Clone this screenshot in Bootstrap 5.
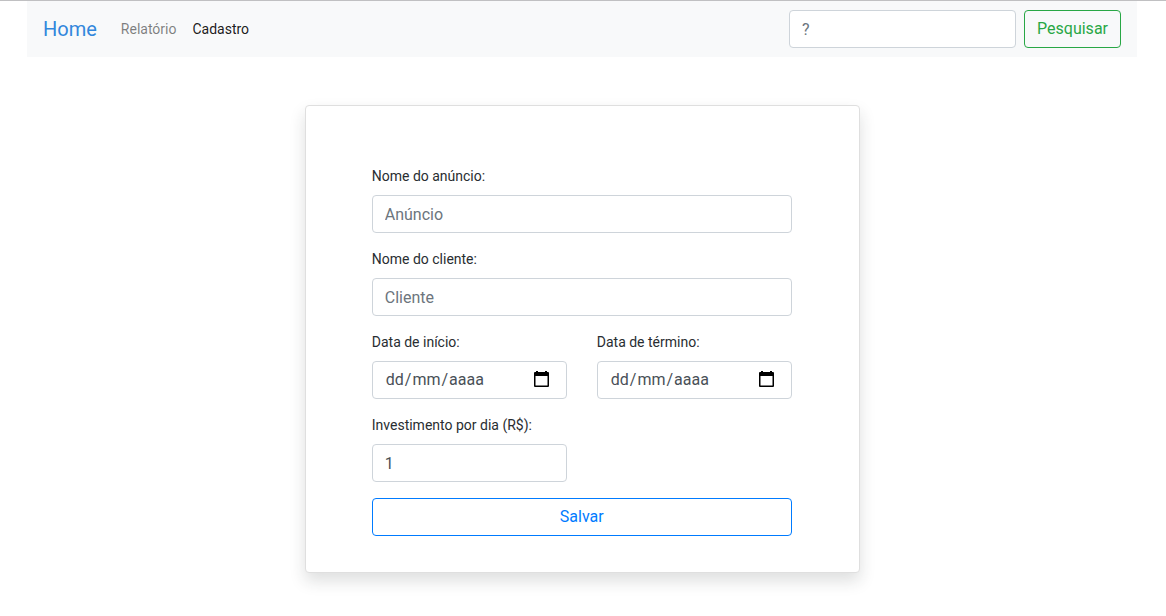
<!DOCTYPE html>
<html lang="pt-BR">
<head>
<meta charset="utf-8">
<meta name="viewport" content="width=device-width, initial-scale=1">
<title>Cadastro</title>
<link href="https://cdn.jsdelivr.net/npm/bootstrap@5.3.0/dist/css/bootstrap.min.css" rel="stylesheet">
<style>
  body { font-family: Roboto, sans-serif; color: #292d31; border-top: 1px solid #c0c0c2; min-height: 100vh; }
  .page { width: 1110px; margin-left: 27px; padding-bottom: 43px; }
  .navbar { --bs-navbar-padding-y: 0; height: 56px; padding: 0 16px; background: #f8f9fa; }
  .navbar-brand { --bs-navbar-brand-margin-end: 16px; font-size: 20px; color: #3287dc !important; }
  .nav-link { font-size: 14px; }
  .navbar-expand .navbar-nav .nav-link { padding: 8px; color: rgba(0,0,0,.5); }
  .navbar-expand .navbar-nav .nav-link.active { color: rgba(0,0,0,.9); }
  .form-control { height: 38px; border: 1px solid #ced4da; border-radius: 4px; color: #495057; padding: 6px 12px; }
  .form-control::placeholder { color: #6c757d; }
  .search-box { width: 227px; }
  .btn { border-radius: 4px; }
  .btn-outline-success { --bs-btn-color: #28a745; --bs-btn-border-color: #28a745; }
  .btn-outline-primary { --bs-btn-color: #007bff; --bs-btn-border-color: #007bff; }
  .card { width: 555px; margin-left: 277.75px; border: 1px solid #dfdfdf; border-radius: 4px; padding: 60px 67px 36px 66px; }
  .form-label { display: block; font-size: 14px; line-height: 21px; margin-bottom: 8px; }
  .row { --bs-gutter-x: 30px; }
  .date-text span { padding: 0 1px; }
  .calendar { margin: 0 4px 2px 0; }
</style>
</head>
<body>
<div class="page">
  <nav class="navbar navbar-expand">
    <a class="navbar-brand" href="#">Home</a>
    <ul class="navbar-nav me-auto">
      <li class="nav-item"><a class="nav-link" href="#">Relatório</a></li>
      <li class="nav-item"><a class="nav-link active" href="#">Cadastro</a></li>
    </ul>
    <form class="d-flex gap-2">
      <input class="form-control search-box" type="text" placeholder="?">
      <button class="btn btn-outline-success" type="button">Pesquisar</button>
    </form>
  </nav>
  <div class="card shadow mt-5">
    <form>
      <div class="mb-3">
        <label class="form-label" for="anuncio">Nome do anúncio:</label>
        <input class="form-control" id="anuncio" type="text" placeholder="Anúncio">
      </div>
      <div class="mb-3">
        <label class="form-label" for="cliente">Nome do cliente:</label>
        <input class="form-control" id="cliente" type="text" placeholder="Cliente">
      </div>
      <div class="row mb-3">
        <div class="col-6">
          <div class="form-label">Data de início:</div>
          <div class="form-control d-flex justify-content-between align-items-center">
            <div class="date-text"><span>dd</span>/<span>mm</span>/<span>aaaa</span></div>
            <svg class="calendar" width="17" height="18" viewBox="0 0 17 18"><path fill="#000" fill-rule="evenodd" d="M3 1h2v1h7V1h2v1h1q1 0 1 1v13q0 1-1 1H2q-1 0-1-1V3q0-1 1-1h1zM2.5 6v9.5h12V6z"/></svg>
          </div>
        </div>
        <div class="col-6">
          <div class="form-label">Data de término:</div>
          <div class="form-control d-flex justify-content-between align-items-center">
            <div class="date-text"><span>dd</span>/<span>mm</span>/<span>aaaa</span></div>
            <svg class="calendar" width="17" height="18" viewBox="0 0 17 18"><path fill="#000" fill-rule="evenodd" d="M3 1h2v1h7V1h2v1h1q1 0 1 1v13q0 1-1 1H2q-1 0-1-1V3q0-1 1-1h1zM2.5 6v9.5h12V6z"/></svg>
          </div>
        </div>
      </div>
      <div class="row mb-3">
        <div class="col-6">
          <label class="form-label" for="valor">Investimento por dia (R$):</label>
          <input class="form-control" id="valor" type="text" value="1">
        </div>
      </div>
      <button class="btn btn-outline-primary w-100 d-block" type="button">Salvar</button>
    </form>
  </div>
</div>
<script src="https://cdn.jsdelivr.net/npm/bootstrap@5.3.0/dist/js/bootstrap.bundle.min.js"></script>
</body>
</html>
